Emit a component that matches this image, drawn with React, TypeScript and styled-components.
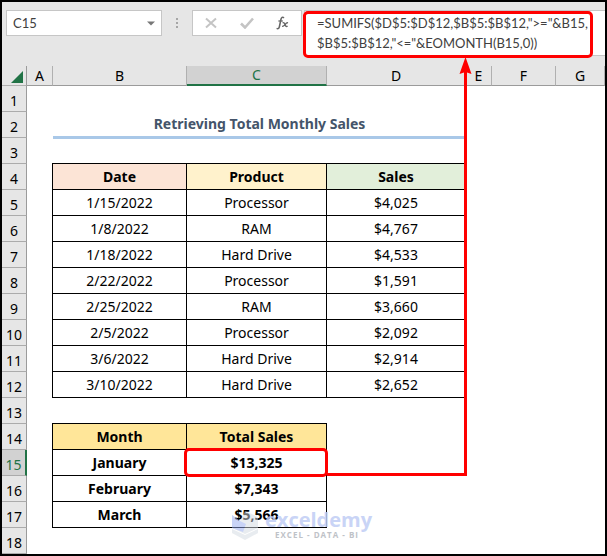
import React from "react";
import styled, { createGlobalStyle, css } from "styled-components";

const GlobalStyle = createGlobalStyle`
  *, *::before { box-sizing: border-box; }
  body { margin: 0; background: #fff; }
  button, input, textarea { font: inherit; color: inherit; margin: 0; padding: 0; border: 0; background: none; border-radius: 0; }
`;

const Window = styled.main`
  position: relative;
  min-height: 100vh;
  border: 2px solid #000;
  background: #fff;
  color: #000;
  font-family: "Noto Sans", "Open Sans", sans-serif;
  font-size: 14px;
  line-height: 20px;
  overflow: hidden;
`;

const FormulaBar = styled.header`
  display: flex;
  align-items: flex-start;
  height: 64px;
  padding: 8px 0 0 4px;
  background: #e6e6e6;
  color: #404040;
`;

const BarBox = styled.div`
  display: flex;
  align-items: center;
  height: 26px;
  border: 1px solid #c6c6c6;
  background: #fff;
`;

const NameBox = styled(BarBox)`
  width: 156px;
  padding: 0 6px;
`;

const NameInput = styled.input`
  flex: 1;
  min-width: 0;
  height: 20px;
  outline: 0;
  font-family: Lato, sans-serif;
  font-size: 13px;
`;

const IconButton = styled.button`
  display: flex;
  svg { display: block; }
`;

const Grip = styled.div`
  display: flex;
  flex-direction: column;
  gap: 2px;
  margin: 8px 14px 0;
  i { width: 2px; height: 2px; background: #a6a6a6; }
`;

const Actions = styled(BarBox)`
  width: 110px;
  justify-content: space-between;
  padding: 0 12px;
`;

const Formula = styled.div`
  position: relative;
  flex: 1;
  height: 46px;
  margin-left: 2px;
  border: 1px solid #c6c6c6;
  border-right: 0;
  background: #fff;
`;

const FormulaText = styled.textarea`
  display: block;
  width: 100%;
  height: 44px;
  padding: 2px 0 0 12px;
  outline: 0;
  resize: none;
  overflow: hidden;
  white-space: pre;
  font-family: Lato, sans-serif;
  font-size: 13px;
`;

const callout = css`
  position: absolute;
  border: 3px solid #f00;
  border-radius: 5px;
  pointer-events: none;
`;

const FormulaCallout = styled.span`
  ${callout}
  inset: 0 12px -3px -2px;
`;

const CellCallout = styled.span`
  ${callout}
  inset: -2px -2px -2px -3px;
`;

const Grid = styled.table`
  width: 100%;
  table-layout: fixed;
  border-collapse: separate;
  border-spacing: 0;
`;

const Col = styled.col<{ $w?: number }>`
  ${(p) => p.$w && `width: ${p.$w}px;`}
`;

const ColumnHead = styled.th<{ $active?: boolean }>`
  height: 20px;
  padding: 0;
  font-weight: 400;
  line-height: 18px;
  border-right: 1px solid #b0b0b0;
  border-bottom: 1px solid #9b9b9b;
  background: ${(p) => (p.$active ? "#d2d2d2" : "#e6e6e6")};
  ${(p) => p.$active && "color: #217346; border-bottom: 2px solid #217346;"}
`;

const Corner = styled.td`
  height: 20px;
  padding: 0 3px 2px 0;
  border-right: 1px solid #9b9b9b;
  border-bottom: 1px solid #b0b0b0;
  background: #e6e6e6;
  vertical-align: bottom;
  svg { display: block; margin-left: auto; }
`;

const RowHead = styled.th<{ $active?: boolean }>`
  height: 26px;
  padding: 5px 0 0;
  font-weight: 400;
  line-height: 20px;
  border-right: 1px solid #9b9b9b;
  border-bottom: 1px solid #ababab;
  background: ${(p) => (p.$active ? "#d2d2d2" : "#e6e6e6")};
  ${(p) => p.$active && "color: #217346; border-right: 2px solid #217346;"}
`;

const Blank = styled.td`
  padding: 0;
`;

const Title = styled.td`
  padding: 0;
  text-align: center;
  font-weight: 700;
  color: #44546a;
  border-bottom: 2px solid #a9c8e8;
  box-shadow: 0 1px 0 #a9c8e8;
`;

const Cell = styled.td<{ $fill?: string; $bold?: boolean }>`
  position: relative;
  padding: 0;
  text-align: center;
  font-weight: ${(p) => (p.$bold ? 700 : 400)};
  background: ${(p) => p.$fill ?? "#fff"};
  border-right: 1px solid #000;
  border-bottom: 1px solid #000;
  box-shadow: -1px 0 0 #000, 0 -1px 0 #000, -1px -1px 0 #000;
  &:has(${CellCallout}) { z-index: 1; }
`;

const Connector = styled.svg`
  position: absolute;
  left: 325px;
  top: 55px;
  z-index: 1;
  pointer-events: none;
`;

const Watermark = styled.div`
  position: absolute;
  left: 229px;
  top: 507px;
  display: flex;
  gap: 5px;
  pointer-events: none;
`;

const Brand = styled.div`
  display: flex;
  flex-direction: column;
  padding-top: 1px;
  font-family: "Open Sans", sans-serif;
  font-weight: 700;
  opacity: 0.85;
`;

const BrandName = styled.span`
  font-size: 20px;
  line-height: 20px;
  color: #c0cdf5;
`;

const Tagline = styled.span`
  padding-left: 10px;
  font-size: 8px;
  line-height: 10px;
  letter-spacing: 1px;
  color: #b4b8be;
`;

const columns: { name: string; width?: number }[] = [
  { name: "A", width: 26 },
  { name: "B", width: 134 },
  { name: "C", width: 140 },
  { name: "D", width: 139 },
  { name: "E", width: 26 },
  { name: "F", width: 64 },
  { name: "G" },
];

type Row = { cells: string[]; fills?: string[]; bold?: boolean };

const rows: Record<number, Row> = {
  4: { cells: ["Date", "Product", "Sales"], fills: ["#fce4d6", "#fff2cc", "#e2efda"], bold: true },
  5: { cells: ["1/15/2022", "Processor", "$4,025"] },
  6: { cells: ["1/8/2022", "RAM", "$4,767"] },
  7: { cells: ["1/18/2022", "Hard Drive", "$4,533"] },
  8: { cells: ["2/22/2022", "Processor", "$1,591"] },
  9: { cells: ["2/25/2022", "RAM", "$3,660"] },
  10: { cells: ["2/5/2022", "Processor", "$2,092"] },
  11: { cells: ["3/6/2022", "Hard Drive", "$2,914"] },
  12: { cells: ["3/10/2022", "Hard Drive", "$2,652"] },
  14: { cells: ["Month", "Total Sales"], fills: ["#ffe699", "#ffe699"], bold: true },
  15: { cells: ["January", "$13,325"], bold: true },
  16: { cells: ["February", "$7,343"], bold: true },
  17: { cells: ["March", "$5,566"], bold: true },
};

function SheetRow({ n }: { n: number }) {
  const row = rows[n];
  const cells = row?.cells ?? [];
  return (
    <tr>
      <RowHead scope="row" $active={n === 15}>{n}</RowHead>
      <Blank />
      {n === 2 && <Title colSpan={3}>Retrieving Total Monthly Sales</Title>}
      {cells.map((text, i) => (
        <Cell key={i} $fill={row.fills?.[i]} $bold={row.bold}>
          {text}
          {n === 15 && i === 1 && <CellCallout />}
        </Cell>
      ))}
      <Blank colSpan={n === 2 ? 3 : 6 - cells.length} />
    </tr>
  );
}

export default function App() {
  return (
    <Window>
      <GlobalStyle />
      <FormulaBar>
        <NameBox>
          <NameInput aria-label="Name box" defaultValue="C15" />
          <IconButton aria-label="Open name list">
            <svg width="8" height="5" viewBox="0 0 8 5"><path d="M0 0.5h8L4 4.5z" fill="#777" /></svg>
          </IconButton>
        </NameBox>
        <Grip><i /><i /><i /></Grip>
        <Actions>
          <IconButton aria-label="Cancel">
            <svg width="12" height="12" viewBox="0 0 12 12"><path d="M1 1.5l10 9M11 1.5l-10 9" stroke="#c4c4c4" strokeWidth="2" /></svg>
          </IconButton>
          <IconButton aria-label="Enter">
            <svg width="14" height="12" viewBox="0 0 14 12"><path d="M1 6.5l4 4L13 1.5" fill="none" stroke="#c4c4c4" strokeWidth="2.6" /></svg>
          </IconButton>
          <IconButton aria-label="Insert function">
            <svg width="13" height="14" viewBox="0 0 13 14" fill="none" stroke="#666">
              <path d="M8 1.8C6.5.6 5.4 1.4 5 3.2L3.4 10.6C3 12.4 2.2 13.2.6 12.4" strokeWidth="1.6" />
              <path d="M2.4 5h4.400" strokeWidth="1.3" />
              <path d="M6.6 6.800c1.600-.6 1.900.4 2.400 1.800s1 2.400 2.600 1.600M12 6.900c-1.600-.5-2.200.7-3 1.800s-1.600 1.900-2.800 1.400" strokeWidth="1.4" />
            </svg>
          </IconButton>
        </Actions>
        <Formula>
          <FormulaText
            aria-label="Formula"
            spellCheck={false}
            defaultValue={'=SUMIFS($D$5:$D$12,$B$5:$B$12,">="&B15,\n$B$5:$B$12,"<="&EOMONTH(B15,0))'}
          />
          <FormulaCallout />
        </Formula>
      </FormulaBar>
      <Grid>
        <colgroup>
          <Col $w={25} />
          {columns.map((c) => <Col key={c.name} $w={c.width} />)}
        </colgroup>
        <thead>
          <tr>
            <Corner>
              <svg width="12" height="12" viewBox="0 0 12 12"><path d="M12 0v12H0z" fill="#217346" /></svg>
            </Corner>
            {columns.map((c) => (
              <ColumnHead key={c.name} scope="col" $active={c.name === "C"}>{c.name}</ColumnHead>
            ))}
          </tr>
        </thead>
        <tbody>
          {Array.from({ length: 18 }, (_, i) => <SheetRow key={i} n={i + 1} />)}
        </tbody>
      </Grid>
      <Connector width="146" height="420" viewBox="0 0 146 420" aria-hidden="true">
        <path d="M0 417.500H138.500V14" fill="none" stroke="#f00" strokeWidth="3" />
        <path d="M138.500 0L144.500 17L138.500 15L132.500 17z" fill="#f00" />
      </Connector>
      <Watermark>
        <svg width="29" height="32" viewBox="0 0 29 32" opacity="0.5">
          <path d="M1 6l8 6 5-10 13 6v11l-13 6L1 19z" fill="#d3dae2" />
          <path d="M1 6l8 6 6 3-3 8L1 19z" fill="#93a9f0" />
          <path d="M1 20l13 6 13-6v4l-13 7-13-7z" fill="#d3dae2" />
        </svg>
        <Brand>
          <BrandName>exceldemy</BrandName>
          <Tagline>EXCEL - DATA - BI</Tagline>
        </Brand>
      </Watermark>
    </Window>
  );
}
